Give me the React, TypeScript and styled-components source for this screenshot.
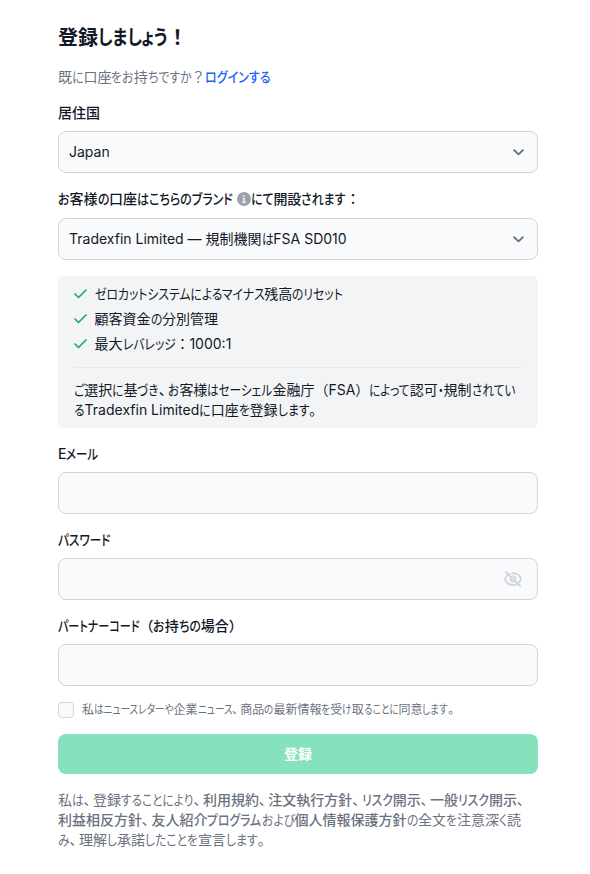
import React, { useLayoutEffect, useRef, useState } from "react";
import styled, { createGlobalStyle, css } from "styled-components";

const GlobalStyle = createGlobalStyle`
  *, *::before, *::after { box-sizing: border-box; }
  body {
    margin: 0;
    background: #fff;
    color: #111827;
    font-family: Inter, "Noto Sans CJK JP", sans-serif;
    font-size: 14px;
    line-height: 20px;
  }
`;

const KanaRun = styled.span<{ $scale: number }>`
  display: inline-block;
  font-feature-settings: "palt";
  transform: scaleX(${(p) => p.$scale});
  transform-origin: left;
`;

const Stop = styled.span`
  font-feature-settings: "palt";
  letter-spacing: 0.17em;
`;

/* A condensed kana run; the negative margin takes back the width the scale frees. */
function Kana({ children, scale }: { children: string; scale: number }) {
  const ref = useRef<HTMLSpanElement>(null);
  const [slack, setSlack] = useState(0);
  useLayoutEffect(() => {
    if (!ref.current) return;
    const natural = ref.current.getBoundingClientRect().width / scale;
    setSlack(natural * (1 - scale));
  }, [children, scale]);
  return <KanaRun ref={ref} $scale={scale} style={{ marginRight: -slack }}>{children}</KanaRun>;
}

/* Condenses kana while kanji and Latin keep their normal advance. */
function Jp({ children, scale = 0.845 }: { children: string; scale?: number }) {
  const runs = children.match(/[ぁ-んァ-ヶー・]+|[、。]|[^ぁ-んァ-ヶー・、。]+/g) ?? [];
  return (
    <>
      {runs.map((run, i) =>
        /^[、。]/.test(run) ? (
          <Stop key={i}>{run}</Stop>
        ) : /^[ぁ-んァ-ヶー・]/.test(run) ? (
          <Kana key={i} scale={scale}>{run}</Kana>
        ) : (
          <React.Fragment key={i}>{run}</React.Fragment>
        )
      )}
    </>
  );
}

const Form = styled.form`
  display: flex;
  flex-direction: column;
  width: 480px;
  margin: 23px 0 0 58px;
  white-space: nowrap;
`;

const Title = styled.h1`
  margin: 0 0 14px;
  font-size: 20px;
  line-height: 30px;
  font-weight: 600;
`;

const Intro = styled.p`
  margin: 0 0 16px;
  color: #6b7280;
`;

const Login = styled.a`
  color: #1c64f2;
  font-weight: 500;
  text-decoration: none;
`;

const Field = styled.div<{ $gap?: number }>`
  display: flex;
  flex-direction: column;
  gap: ${(p) => p.$gap ?? 8}px;
  margin-bottom: 16px;

  > label {
    height: 20px;
    display: flex;
    align-items: center;
    font-weight: 500;
  }
`;

const control = css`
  height: 42px;
  border: 1px solid #d1d5db;
  border-radius: 8px;
  background: #f9fafb;
`;

const Select = styled.div`
  ${control}
  display: flex;
  align-items: center;
  justify-content: space-between;
  padding: 0 13px 0 10px;
`;

const InputBox = styled.div`
  ${control}
  display: flex;
  align-items: center;
  padding-right: 14px;
`;

const Input = styled.input`
  flex: 1;
  height: 100%;
  border: 0;
  padding: 0 10px;
  background: transparent;
  font: inherit;
  outline: none;
`;

const Info = styled.svg`
  margin: 0 0 0 4px;
  flex: none;
`;

const Panel = styled.section`
  height: 152px;
  margin-bottom: 16px;
  padding: 5px 16px 0;
  border-radius: 6px;
  background: #f3f4f6;
`;

const Benefits = styled.ul`
  list-style: none;
  margin: 0;
  padding: 0 0 11px;
  border-bottom: 1px solid #e5e7eb;
`;

const Benefit = styled.li`
  display: flex;
  align-items: center;
  gap: 7.5px;
  height: 25px;
`;

const Note = styled.p`
  margin: 12px 0 0;
`;

const Consent = styled.label`
  display: flex;
  align-items: center;
  gap: 8px;
  height: 16px;
  margin-bottom: 16px;
  color: #6b7280;
  font-size: 12px;
  line-height: 16px;
`;

const Checkbox = styled.input`
  appearance: none;
  width: 16px;
  height: 16px;
  margin: 0;
  border: 1px solid #d1d5db;
  border-radius: 4px;
  background: #f9fafb;
`;

const Submit = styled.button`
  height: 40px;
  border: 0;
  border-radius: 8px;
  background: #86e2bc;
  color: #fff;
  font: inherit;
  font-weight: 600;
`;

const Legal = styled.p`
  margin: 16px 0 0;
  color: #6b7280;
`;

const Term = styled.a`
  font-weight: 500;
`;

const Chevron = () => (
  <svg width="12" height="12" viewBox="0 0 12 12" fill="none" stroke="#6b7280" strokeWidth="1.9" strokeLinecap="round" strokeLinejoin="round">
    <path d="M2.2 4.2 6.5 8.4 10.8 4.2" />
  </svg>
);

const Check = () => (
  <svg width="13" height="12" viewBox="0 0 13 12" fill="none" stroke="#24a576" strokeWidth="1.7" strokeLinecap="round" strokeLinejoin="round">
    <path d="M1 6 4.5 9.5 12 2" />
  </svg>
);

const EyeOff = () => (
  <svg width="20" height="20" viewBox="0 0 20 20" fill="none" stroke="#d1d5db" strokeWidth="1.9" strokeLinecap="round" strokeLinejoin="round">
    <path d="M6.1 5.2C4 6.2 2.6 7.9 2 10c1 3.5 4 6 8 6 1.3 0 2.5-.2 3.6-.7M9 4.2c4.4-.3 8 2.2 9 5.8-.4 1.3-1.1 2.500-2.100 3.500M2.800 2.800l14.400 14.400" />
    <path d="M8 8.100a2.800 2.800 0 0 0 3.900 3.900M10.500 7.300a2.800 2.800 0 0 1 2.200 2.200" />
  </svg>
);

const InfoIcon = () => (
  <Info width="14" height="14" viewBox="0 0 14 14">
    <circle cx="7" cy="7" r="7" fill="#9ca3af" />
    <circle cx="6.8" cy="4.1" r=".9" fill="#fff" />
    <path d="M5.5 6.5H7.2V10M5.2 10.1H8.9" fill="none" stroke="#fff" strokeWidth="1.2" />
  </Info>
);

const benefits = [
  "ゼロカットシステムによるマイナス残高のリセット",
  "顧客資金の分別管理",
  "最大レバレッジ：1000:1",
];

export default function App() {
  return (
    <>
      <GlobalStyle />
      <Form lang="ja">
        <Title><Jp scale={0.83}>登録しましょう！</Jp></Title>
        <Intro>
          <Jp>既に口座をお持ちですか？</Jp>
          <Login><Jp scale={0.86}>ログインする</Jp></Login>
        </Intro>

        <Field>
          <label><span><Jp>居住国</Jp></span></label>
          <Select>Japan<Chevron /></Select>
        </Field>
        <Field $gap={9}>
          <label>
            <span><Jp scale={0.855}>お客様の口座はこちらのブランド</Jp></span>
            <InfoIcon />
            <span><Jp scale={0.855}>にて開設されます：</Jp></span>
          </label>
          <Select><span><Jp>Tradexfin Limited — 規制機関はFSA SD010</Jp></span><Chevron /></Select>
        </Field>

        <Panel>
          <Benefits>
            {benefits.map((text) => (
              <Benefit key={text}><Check /><span><Jp>{text}</Jp></span></Benefit>
            ))}
          </Benefits>
          <Note>
            <Jp scale={0.83}>ご選択に基づき、お客様はセーシェル金融庁（FSA）によって認可・規制されてい</Jp><br />
            <Jp>るTradexfin Limitedに口座を登録します。</Jp>
          </Note>
        </Panel>

        <Field>
          <label><span><Jp scale={0.82}>Eメール</Jp></span></label>
          <InputBox><Input type="email" /></InputBox>
        </Field>
        <Field>
          <label><span><Jp scale={0.83}>パスワード</Jp></span></label>
          <InputBox><Input type="password" /><EyeOff /></InputBox>
        </Field>
        <Field>
          <label><span><Jp scale={0.79}>パートナーコード</Jp><Jp>（お持ちの場合）</Jp></span></label>
          <InputBox><Input /></InputBox>
        </Field>

        <Consent>
          <Checkbox type="checkbox" />
          <span><Jp scale={0.8}>私はニュースレターや企業ニュース、商品の最新情報を受け取ることに同意します。</Jp></span>
        </Consent>
        <Submit type="button">登録</Submit>

        <Legal>
          <Jp scale={0.835}>私は、登録することにより、</Jp><Term>利用規約</Term><Jp>、</Jp><Term>注文執行方針</Term><Jp>、</Jp>
          <Term><Jp>リスク開示</Jp></Term><Jp>、</Jp><Term><Jp>一般リスク開示</Jp></Term><Jp>、</Jp><br />
          <Term>利益相反方針</Term><Jp>、</Jp><Term><Jp>友人紹介プログラム</Jp></Term><Jp>および</Jp>
          <Term>個人情報保護方針</Term><Jp>の全文を注意深く読</Jp><br />
          <Jp>み、理解し承諾したことを宣言します。</Jp>
        </Legal>
      </Form>
    </>
  );
}
